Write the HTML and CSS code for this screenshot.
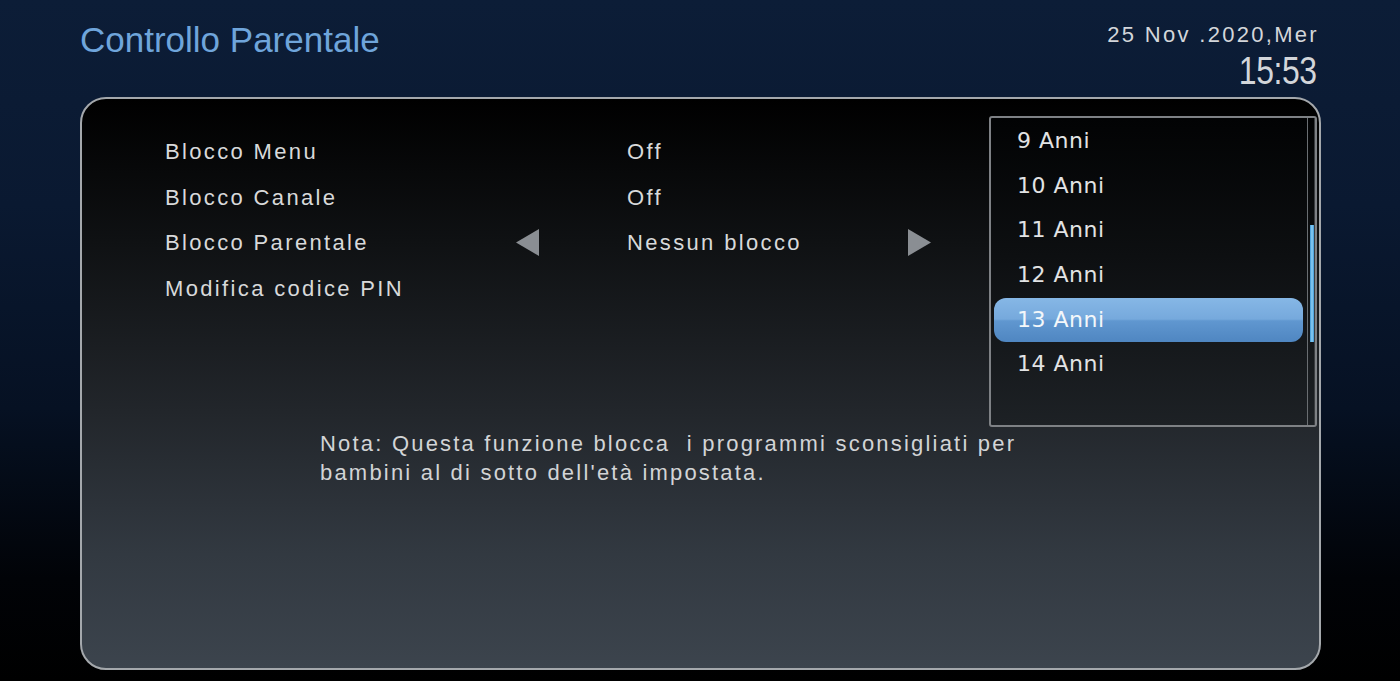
FILE: index.html
```html
<!DOCTYPE html>
<html lang="it">
<head>
<meta charset="utf-8">
<title>Controllo Parentale</title>
<link rel="stylesheet" href="styles.css">
</head>
<body>
<div class="screen">
  <header class="header">
    <h1 class="title">Controllo Parentale</h1>
    <div class="clock">
      <div class="date">25 Nov .2020,Mer</div>
      <div class="time">15:53</div>
    </div>
  </header>
  <main class="panel">
    <div class="rows">
      <div class="row">
        <span class="label">Blocco Menu</span>
        <span class="arrow-cell"></span>
        <span class="value">Off</span>
        <span class="arrow-cell"></span>
      </div>
      <div class="row">
        <span class="label">Blocco Canale</span>
        <span class="arrow-cell"></span>
        <span class="value">Off</span>
        <span class="arrow-cell"></span>
      </div>
      <div class="row">
        <span class="label">Blocco Parentale</span>
        <span class="arrow-cell"><svg class="arrow" width="23" height="27" viewBox="0 0 23 27"><polygon points="23,0 23,27 0,13.5" /></svg></span>
        <span class="value">Nessun blocco</span>
        <span class="arrow-cell"><svg class="arrow" width="23" height="27" viewBox="0 0 23 27"><polygon points="0,0 0,27 23,13.5" /></svg></span>
      </div>
      <div class="row">
        <span class="label">Modifica codice PIN</span>
        <span class="arrow-cell"></span>
        <span class="value"></span>
        <span class="arrow-cell"></span>
      </div>
    </div>
    <p class="note">Nota: Questa funzione blocca&nbsp; i programmi sconsigliati per<br>bambini al di sotto dell'età impostata.</p>

    <div class="dropdown">
      <ul class="options">
        <li class="option">9 Anni</li>
        <li class="option">10 Anni</li>
        <li class="option">11 Anni</li>
        <li class="option">12 Anni</li>
        <li class="option selected">13 Anni</li>
        <li class="option">14 Anni</li>
      </ul>
      <div class="track"><div class="thumb"></div></div>
    </div>
  </main>
</div>
</body>
</html>
```
FILE: styles.css
```css
html, body {
  margin: 0;
  padding: 0;
}
body {
  width: 1400px;
  height: 681px;
  overflow: hidden;
  background: linear-gradient(180deg, #0c1d37 0%, #0a1931 30%, #061123 60%, #010307 85%, #000 100%);
  font-family: "Liberation Sans", Arial, sans-serif;
}
.screen {
  width: 1400px;
  height: 681px;
  display: flex;
  flex-direction: column;
}
.header {
  height: 97px;
  display: flex;
  justify-content: space-between;
  align-items: flex-start;
  padding: 0 83px 0 80px;
  box-sizing: border-box;
}
.title {
  margin: 20px 0 0 0;
  font-weight: normal;
  font-size: 35px;
  line-height: 40px;
  color: #6fa5db;
}
.clock {
  display: flex;
  flex-direction: column;
  align-items: flex-end;
  padding-top: 22px;
  color: #d3d6da;
}
.date {
  font-size: 22px;
  line-height: 26px;
  letter-spacing: 2.3px;
  margin-right: -2px;
}
.time {
  margin-top: 3px;
  font-size: 38px;
  line-height: 40px;
  letter-spacing: -0.5px;
  transform: scaleX(0.84);
  transform-origin: right center;
}
.panel {
  position: relative;
  margin-left: 80px;
  width: 1241px;
  height: 573px;
  box-sizing: border-box;
  border: 2px solid #a4a8ac;
  border-radius: 26px;
  background: linear-gradient(180deg, #000 0%, #0f1113 25%, #22262b 55%, #323941 80%, #3c444d 100%);
  padding: 30px 0 0 83px;
}
.rows {
  display: flex;
  flex-direction: column;
}
.row {
  display: grid;
  grid-template-columns: 351px 111px 281px 23px;
  height: 45.6px;
  align-items: center;
  font-size: 22px;
  color: #d8d9da;
  letter-spacing: 2.35px;
}
.label, .value {
  line-height: 45.6px;
  white-space: nowrap;
}
.arrow-cell {
  display: flex;
  align-items: center;
  height: 45.6px;
}
.arrow {
  display: block;
  fill: #8a8e93;
}
.note {
  margin: 118px 0 0 155px;
  font-size: 22px;
  line-height: 29px;
  letter-spacing: 2.2px;
  color: #d2d4d6;
}
.dropdown {
  position: absolute;
  left: 907px;
  top: 17px;
  width: 328px;
  height: 311px;
  box-sizing: border-box;
  border: 2px solid #7e8185;
  border-radius: 3px;
  background: linear-gradient(180deg, #020304 0%, #0d0f11 45%, #1d2125 100%);
  display: flex;
}
.options {
  list-style: none;
  margin: 0;
  padding: 1px 0 0 0;
  flex: 1;
}
.option {
  margin-left: 3px;
  width: 309px;
  height: 44.6px;
  line-height: 44.6px;
  padding-left: 23px;
  box-sizing: border-box;
  font-family: "DejaVu Sans", sans-serif;
  font-size: 22px;
  letter-spacing: 0.5px;
  color: #e2e3e4;
}
.option.selected {
  height: 44px;
  margin-top: 0.3px;
  margin-bottom: 0.3px;
  border-radius: 12px;
  color: #f4f7fa;
  background: linear-gradient(180deg, #86b7e6 0%, #76a9dc 48%, #6097d0 52%, #4f86c1 100%);
}
.track {
  width: 8px;
  box-sizing: border-box;
  border-left: 1px solid #6a6e72;
  border-right: 1px solid #3a3d40;
  padding-left: 2px;
}
.thumb {
  width: 4px;
  height: 117px;
  margin-top: 107px;
  background: linear-gradient(90deg, #3c97d6 0%, #8fd0f5 50%, #3c97d6 100%);
}
```
